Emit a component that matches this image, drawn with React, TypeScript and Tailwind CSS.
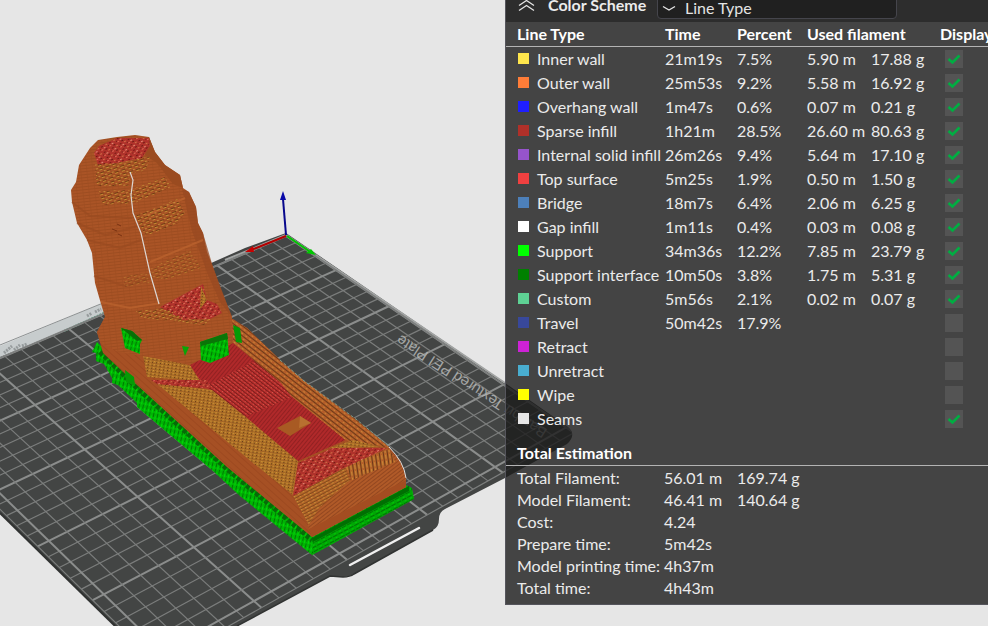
import React from "react";

type Pt = [number, number];

const rows = [
  { name: "Inner wall", color: "bg-[#ffe64c]", time: "21m19s", pct: "7.5%", len: "5.90 m", wt: "17.88 g", on: true },
  { name: "Outer wall", color: "bg-[#ff7d38]", time: "25m53s", pct: "9.2%", len: "5.58 m", wt: "16.92 g", on: true },
  { name: "Overhang wall", color: "bg-[#1f1fff]", time: "1m47s", pct: "0.6%", len: "0.07 m", wt: "0.21 g", on: true },
  { name: "Sparse infill", color: "bg-[#b03029]", time: "1h21m", pct: "28.5%", len: "26.60 m", wt: "80.63 g", on: true },
  { name: "Internal solid infill", color: "bg-[#9654cc]", time: "26m26s", pct: "9.4%", len: "5.64 m", wt: "17.10 g", on: true },
  { name: "Top surface", color: "bg-[#f04040]", time: "5m25s", pct: "1.9%", len: "0.50 m", wt: "1.50 g", on: true },
  { name: "Bridge", color: "bg-[#4d80ba]", time: "18m7s", pct: "6.4%", len: "2.06 m", wt: "6.25 g", on: true },
  { name: "Gap infill", color: "bg-white", time: "1m11s", pct: "0.4%", len: "0.03 m", wt: "0.08 g", on: true },
  { name: "Support", color: "bg-[#00ff00]", time: "34m36s", pct: "12.2%", len: "7.85 m", wt: "23.79 g", on: true },
  { name: "Support interface", color: "bg-[#008000]", time: "10m50s", pct: "3.8%", len: "1.75 m", wt: "5.31 g", on: true },
  { name: "Custom", color: "bg-[#5ed194]", time: "5m56s", pct: "2.1%", len: "0.02 m", wt: "0.07 g", on: true },
  { name: "Travel", color: "bg-[#38489b]", time: "50m42s", pct: "17.9%", len: "", wt: "", on: false },
  { name: "Retract", color: "bg-[#cd22d6]", time: "", pct: "", len: "", wt: "", on: false },
  { name: "Unretract", color: "bg-[#49adcf]", time: "", pct: "", len: "", wt: "", on: false },
  { name: "Wipe", color: "bg-[#ffff00]", time: "", pct: "", len: "", wt: "", on: false },
  { name: "Seams", color: "bg-[#e6e6e6]", time: "", pct: "", len: "", wt: "", on: true },
];

const totals = [
  ["Total Filament:", "56.01 m", "169.74 g"],
  ["Model Filament:", "46.41 m", "140.64 g"],
  ["Cost:", "4.24", ""],
  ["Prepare time:", "5m42s", ""],
  ["Model printing time:", "4h37m", ""],
  ["Total time:", "4h43m", ""],
];

/* Perspective projection of bed cells, solved from four known points. */
function solveProjection(src: Pt[], dst: Pt[]) {
  const m: number[][] = [];
  src.forEach(([u, v], i) => {
    const [x, y] = dst[i];
    m.push([u, v, 1, 0, 0, 0, -u * x, -v * x, x]);
    m.push([0, 0, 0, u, v, 1, -u * y, -v * y, y]);
  });
  for (let c = 0; c < 8; c++) {
    let p = c;
    for (let r = c; r < 8; r++) if (Math.abs(m[r][c]) > Math.abs(m[p][c])) p = r;
    [m[c], m[p]] = [m[p], m[c]];
    for (let r = 0; r < 8; r++) {
      if (r === c) continue;
      const f = m[r][c] / m[c][c];
      for (let k = c; k < 9; k++) m[r][k] -= f * m[c][k];
    }
  }
  const h = m.map((row, i) => row[8] / row[i]);
  return (u: number, v: number): Pt => {
    const w = h[6] * u + h[7] * v + 1;
    return [(h[0] * u + h[1] * v + h[2]) / w, (h[3] * u + h[4] * v + h[5]) / w];
  };
}

const project = solveProjection(
  [[0, 0], [25, 5], [5, 20], [25, 20]],
  [[286, 236], [495, 467], [35, 405], [254, 601]],
);

const BED = 25.6;

const PLATE =
  "M0 354 L103 311 L245 248 L286 233 L505 383 L568 427 Q577 435 567 444 L505 478 L445 509 Q439 512 439 519 Q439 527 433 530 L354 574 Q350 577 343 577 L330 576 L237 626 L115 626 L0 513Z";

function Grid() {
  const lines: React.ReactNode[] = [];
  for (let i = 0; i <= 25; i++) {
    const bold = i % 5 === 0;
    const a = project(i, 0);
    const b = project(i, BED);
    const c = project(0, i);
    const d = project(BED, i);
    const stroke = bold ? "#8b8d8c" : "#7b7d7c";
    const width = bold ? 2 : 1.2;
    lines.push(<line key={"u" + i} x1={a[0]} y1={a[1]} x2={b[0]} y2={b[1]} stroke={stroke} strokeWidth={width} />);
    lines.push(<line key={"v" + i} x1={c[0]} y1={c[1]} x2={d[0]} y2={d[1]} stroke={stroke} strokeWidth={width} />);
  }
  const corners = [project(0, 0), project(BED, 0), project(BED, BED), project(0, BED)];
  return (
    <g clipPath="url(#plate)">
      {lines}
      <polygon points={corners.map((p) => p.join(",")).join(" ")} fill="none" stroke="#7b7d7c" strokeWidth="1.2" />
    </g>
  );
}

function Patterns() {
  return (
    <defs>
      <clipPath id="plate">
        <path d={PLATE} />
      </clipPath>
      <pattern id="wall" width="6" height="3" patternUnits="userSpaceOnUse" patternTransform="rotate(-6)">
        <rect width="6" height="3" fill="#aa5426" />
        <rect y="2" width="6" height="1" fill="#9d4d21" />
        <rect x="2" width="1" height="2" fill="#a35023" />
      </pattern>
      <pattern id="side" width="5" height="5" patternUnits="userSpaceOnUse" patternTransform="rotate(42)">
        <rect width="5" height="5" fill="#a65024" />
        <rect y="3" width="5" height="1" fill="#9d4920" />
      </pattern>
      <pattern id="red" width="4" height="3" patternUnits="userSpaceOnUse" patternTransform="rotate(38)">
        <rect width="4" height="3" fill="#b9302e" />
        <rect y="2" width="4" height="1" fill="#7d1d1c" />
        <rect width="1" height="1" fill="#da5a4c" />
      </pattern>
      <pattern id="deepred" width="4" height="3" patternUnits="userSpaceOnUse" patternTransform="rotate(-50)">
        <rect width="4" height="3" fill="#b0292a" />
        <rect y="2" width="4" height="1" fill="#922122" />
      </pattern>
      <pattern id="speckle" width="9" height="6" patternUnits="userSpaceOnUse" patternTransform="rotate(-28)">
        <rect width="9" height="6" fill="#b0322b" />
        <rect x="1" width="2" height="1" fill="#df6a55" />
        <rect x="5" y="1" width="2" height="1" fill="#6b1c14" />
        <rect x="7" y="3" width="2" height="1" fill="#cf7046" />
        <rect x="2" y="3" width="2" height="1" fill="#741b15" />
        <rect x="4" y="5" width="2" height="1" fill="#e08a72" />
        <rect y="5" width="1" height="1" fill="#6f2116" />
      </pattern>
      <pattern id="gold" width="4" height="3" patternUnits="userSpaceOnUse" patternTransform="rotate(8)">
        <rect width="4" height="3" fill="#b37529" />
        <rect y="2" width="4" height="1" fill="#a26324" />
        <rect x="1" y="1" width="1" height="1" fill="#5e3a15" />
        <rect x="3" width="1" height="1" fill="#cd9836" />
      </pattern>
      <pattern id="goldfront" width="5" height="3" patternUnits="userSpaceOnUse" patternTransform="rotate(-28)">
        <rect width="5" height="3" fill="#b36629" />
        <rect y="2" width="5" height="1" fill="#854b1c" />
        <rect x="1" width="2" height="1" fill="#ca8c37" />
      </pattern>
      <pattern id="goldloose" width="7" height="4" patternUnits="userSpaceOnUse" patternTransform="rotate(-18)">
        <rect width="3" height="1" fill="#c88b35" />
        <rect x="4" y="2" width="2" height="1" fill="#c08a38" />
        <rect y="3" width="4" height="1" fill="#713b16" />
      </pattern>
      <pattern id="rib" width="5" height="4" patternUnits="userSpaceOnUse" patternTransform="rotate(38)">
        <rect width="5" height="4" fill="#b35d29" />
        <rect y="3" width="5" height="1" fill="#6c3b18" />
        <rect y="1" width="2" height="1" fill="#c88135" />
      </pattern>
      <pattern id="ribfront" width="4" height="6" patternUnits="userSpaceOnUse" patternTransform="rotate(-8)">
        <rect width="4" height="6" fill="#b5622a" />
        <rect width="1" height="6" fill="#6c3b18" />
        <rect x="2" width="1" height="4" fill="#c68a36" />
      </pattern>
      <pattern id="front" width="6" height="3" patternUnits="userSpaceOnUse" patternTransform="rotate(-38)">
        <rect width="6" height="3" fill="#b05a28" />
        <rect y="2" width="6" height="1" fill="#934720" />
      </pattern>
      <pattern id="green" width="4" height="6" patternUnits="userSpaceOnUse" patternTransform="rotate(12)">
        <rect width="4" height="6" fill="#00b404" />
        <rect width="1" height="4" fill="#007a03" />
        <rect x="2" y="3" width="1" height="3" fill="#00d806" />
      </pattern>
      <pattern id="greenfront" width="6" height="4" patternUnits="userSpaceOnUse" patternTransform="rotate(-28)">
        <rect width="6" height="4" fill="#00a804" />
        <rect y="2" width="5" height="1" fill="#007503" />
        <rect x="2" width="2" height="1" fill="#00ca05" />
      </pattern>
    </defs>
  );
}

function Plate() {
  return (
    <g>
      <path d={PLATE} fill="#434544" />
      <path d="M0 346 L103 303 L112 311 L0 357Z" fill="#c7cccd" />
      <path d="M0 345 L103 303 M0 358 L103 314" stroke="#8d9192" strokeWidth="1" />
      <path d="M225 260 L286 235 L505 383" fill="none" stroke="#a2a4a3" strokeWidth="2" />
      <path d="M4 353 L12 346 M14 350 l6 -5 M22 346 l5 -2 M87 316 l5 -3 M95 312 l6 -3" stroke="#969b9c" strokeWidth="3" strokeDasharray="2 1" />
      <path d="M64 331 L104 313" stroke="#4e9477" strokeWidth="2" strokeDasharray="2 1" />
      <Grid />
      <text
        transform="translate(548 430) rotate(213)"
        className="font-['Liberation_Sans'] text-[15px]"
        fill="#b5b7b6"
        opacity="0.85"
      >
        Bambu Textured PEI Plate
      </text>
      <path d="M115 626 L0 513" stroke="#303231" strokeWidth="2" />
      <path d="M237 626 L330 576 L343 577 Q350 577 354 574 L433 530" fill="none" stroke="#313332" strokeWidth="1.5" />
      <path d="M350 565 L419 528" stroke="#f0f0f0" strokeWidth="2.5" strokeLinecap="round" />
    </g>
  );
}

function Axes() {
  return (
    <g strokeWidth="2">
      <path d="M286 235 L283 199" stroke="#08088c" />
      <path d="M280 200 L283 191 L286 200Z" fill="#0909a8" />
      <path d="M286 236 L251 250" stroke="#b50000" />
      <path d="M253 246 L245 252 L254 252Z" fill="#c80000" />
      <path d="M287 236 L309 251" stroke="#00c400" />
      <path d="M311 249 L316 255 L306 253Z" fill="#00c800" />
    </g>
  );
}

function Model() {
  return (
    <g>
      {/* support skirt */}
      <path
        d="M97 342 L92 352 L96 353 L96 361 L104 364 L112 378 L112 383 L118 385 L137 403 L137 407 L163 429 L213 471 L240 496 L312 555 L414 499 L412 488 L400 482 L312 530 L130 376Z"
        fill="url(#green)"
      />
      <path d="M312 538 L409 486 L410 494 L313 546Z" fill="#006f03" />
      <path d="M313 542 L411 490 L414 499 L312 555Z" fill="url(#greenfront)" />
      <path d="M100 352 L137 388 L227 469 L312 540" fill="none" stroke="#076b08" strokeWidth="5" strokeDasharray="4 2" />

      {/* body */}
      <path
        d="M97 332 L103 353 L137 385 L227 467 L312 537 L406 487 L406 477 L400 460 L390 448 L357 420 L303 380 L280 360 L247 328 L233 319 L105 317Z"
        fill="url(#side)"
      />
      <path d="M232 320 L247 328 L280 360 L303 380 L357 420 L390 448 L345 440 L292 397 L233 344Z" fill="url(#rib)" />
      <path d="M293 496 L340 470 L387 448 L400 460 L406 477 L406 487 L312 537 L304 515Z" fill="url(#front)" />
      <path d="M293 496 L345 466 L350 480 L320 507 L309 525Z" fill="url(#goldfront)" />
      <path d="M345 466 L390 449 L395 462 L352 480Z" fill="url(#ribfront)" />
      <path d="M309 529 L406 480 L406 487 L312 537Z" fill="#a34d21" />
      <path d="M187 365 L233 343 L280 382 L292 397 L345 440 L298 461 L245 417 L207 388Z" fill="url(#red)" />
      <path d="M292 397 L345 440 L298 461 L245 417Z" fill="url(#deepred)" />
      <path d="M187 365 L233 343 L254 361 L207 386Z" fill="url(#deepred)" />
      <path d="M277 428 L300 416 L311 423 L290 436Z" fill="#a85a23" />
      <path d="M300 416 L311 423 L299 428Z" fill="#b87030" />
      <path d="M157 384 L212 390 L247 418 L298 461 L293 495 L253 463Z" fill="url(#gold)" />
      <path d="M143 355 L190 365 L200 381 L147 377Z" fill="url(#gold)" />
      <path d="M151 380 L207 380 L212 389 L157 384Z" fill="url(#speckle)" />
      <path d="M298 463 L333 448 L387 448 L340 470 L293 496Z" fill="url(#speckle)" />
      <path d="M330 448 L353 440 L382 447Z" fill="url(#gold)" />
      <path d="M280 360 L303 380 L357 420 L389 446" fill="none" stroke="#7e9b8b" strokeWidth="1" strokeDasharray="3 2" />
      <path d="M389 447 Q404 462 406 478" fill="none" stroke="#dedede" strokeWidth="1" />

      {/* tower */}
      <path
        d="M90 148 L98 140 L117 137 L135 135 L149 137 L155 152 L165 165 L180 175 L183 188 L189 192 L196 207 L198 223 L203 233 L207 252 L213 267 L220 287 L232 317 L233 343 L190 365 L143 356 L118 352 L100 342 L97 332 L105 317 L99 297 L95 283 L92 253 L87 240 L77 223 L72 202 L71 190 L76 182 L79 165Z"
        fill="url(#wall)"
      />
      <path d="M149 137 L155 152 L165 165 L180 175 L183 188 L173 184 L157 163 L145 155Z" fill="#9a4b20" />
      <path d="M182 189 L189 192 L196 207 L198 223 L203 233 L213 267 L232 317 L220 302 L208 275 L192 231Z" fill="#984a21" opacity="0.75" />
      <path d="M72 202 L90 216 L132 218 M77 223 L105 235 L138 226 M87 240 L120 248 L146 238 M94 276 L125 286 L152 277" fill="none" stroke="#984920" strokeWidth="2" opacity="0.6" />
      <path d="M101 302 L130 308 L160 303 M145 216 L185 198 M150 262 L203 240" fill="none" stroke="#bc642f" strokeWidth="2" opacity="0.7" />
      <path d="M94 153 L99 146 L117 138 L149 138 L150 146 L142 158 L117 163 L98 165Z" fill="url(#speckle)" />
      <path d="M95 164 L117 163 L142 158 L150 157 L146 170 L131 174 L128 186 L97 186Z" fill="url(#goldloose)" />
      <path d="M98 191 L130 190 L165 177 L171 187 L135 203 L102 205Z" fill="url(#goldloose)" />
      <path d="M135 216 L177 199 L185 213 L178 223 L146 236Z" fill="url(#goldloose)" />
      <path d="M151 268 L190 250 L201 268 L170 279 L151 279Z" fill="url(#goldloose)" opacity="0.6" />
      <path d="M123 276 L148 273 L150 283 L125 287Z" fill="url(#goldloose)" opacity="0.5" />
      <path d="M160 307 L203 284 L207 300 L217 304 L222 313 L210 319 L183 320Z" fill="url(#speckle)" />
      <path d="M136 311 L165 308 L185 319 L212 319 L204 325 L172 321 L142 318Z" fill="url(#goldloose)" />
      <path d="M201 286 L207 300 L200 309Z" fill="url(#gold)" />
      <path d="M117 224 l4 2 M112 229 l5 2 M118 234 l4 2" stroke="#7a3212" strokeWidth="1" />
      <path d="M130 172 L133 180 L131 195 L133 213 L141 233 L150 273 L159 304" fill="none" stroke="#dcd6d2" strokeWidth="1.2" />

      {/* support in openings */}
      <path d="M121 328 L132 331 L142 340 L140 344 L140 354 L125 348Z" fill="url(#green)" />
      <path d="M121 328 L132 331 L142 340 L137 341Z" fill="#087007" />
      <path d="M200 342 L227 333 L229 355 L210 363 L201 360Z" fill="url(#green)" />
      <path d="M200 342 L227 333 L228 339 L201 346Z" fill="#0a7508" />
      <path d="M233 325 L240 328 L242 343 L236 342Z" fill="#059a06" />
      <path d="M182 346 L189 347 L185 356Z" fill="#08a607" />
      <path d="M125 370 L134 377 L135 386 L126 382Z" fill="#069b06" />
    </g>
  );
}

function Scene() {
  return (
    <svg
      className="absolute left-0 top-0"
      width="988"
      height="626"
      viewBox="0 0 988 626"
      role="img"
      aria-label="Sliced model on the build plate"
    >
      <Patterns />
      <Plate />
      <Axes />
      <Model />
    </svg>
  );
}

function Check({ name, on }: { name: string; on: boolean }) {
  return (
    <label className="relative block size-[18px]">
      <input
        type="checkbox"
        defaultChecked={on}
        aria-label={"Display " + name}
        className="peer block size-[18px] appearance-none bg-[#545454]"
      />
      <svg
        viewBox="0 0 18 18"
        className="pointer-events-none absolute inset-0 hidden size-[18px] peer-checked:block"
        fill="none"
        stroke="#00ae42"
        strokeWidth="2.6"
      >
        <path d="M3.5 9 L7.5 12.5 L14.5 5.5" />
      </svg>
    </label>
  );
}

function PanelHeader() {
  return (
    <div className="flex h-[22px] items-end bg-[#2d2d2d] pl-[11px] pb-[3px]">
      <button type="button" aria-label="Collapse panel" className="flex h-[26px] w-[31px] items-center">
        <svg width="20" height="20" viewBox="0 0 20 20" fill="none" stroke="#e4e4e4" strokeWidth="1.3">
          <path d="M2 9.5 L9.5 4.5 L17 9.5 M2 14.5 L9.5 9.5 L17 14.5" />
        </svg>
      </button>
      <label htmlFor="scheme" className="w-[109px] pb-0.5 font-bold leading-6">
        Color Scheme
      </label>
      <div className="relative">
        <select
          id="scheme"
          className="block h-[26px] w-[240px] appearance-none rounded-sm border border-[#45454c] bg-[#202020] pl-[27px] pt-1 text-base leading-5 text-[#e4e4e4]"
        >
          <option>Line Type</option>
        </select>
        <svg
          className="pointer-events-none absolute bottom-1 left-[5px]"
          width="14"
          height="14"
          viewBox="0 0 14 14"
          fill="none"
          stroke="#e4e4e4"
          strokeWidth="1.4"
        >
          <path d="M1 5.5 L7 9 L13 5.5" />
        </svg>
      </div>
    </div>
  );
}

export default function App() {
  return (
    <main className="relative flex min-h-screen items-start overflow-hidden bg-[#e6e6e6] font-['Lato',sans-serif] text-base text-[#ebebeb]">
      <Scene />
      <section className="relative ml-[505px] min-w-0 flex-1 overflow-hidden border-b border-l border-[#55555c] bg-[#1b1b1b]/80">
        <PanelHeader />
        <table className="w-[504px] table-fixed border-collapse whitespace-nowrap text-left">
          <colgroup>
            <col className="w-[159px]" />
            <col className="w-[72px]" />
            <col className="w-[70px]" />
            <col className="w-[64px]" />
            <col className="w-[69px]" />
            <col className="w-[70px]" />
          </colgroup>
          <thead>
            <tr className="h-6 border-b border-[#b4b4b4] font-bold leading-[23px] text-white">
              <th className="p-0 pl-[11px]">Line Type</th>
              <th className="p-0">Time</th>
              <th className="p-0">Percent</th>
              <th className="p-0" colSpan={2}>Used filament</th>
              <th className="p-0">Display</th>
            </tr>
          </thead>
          <tbody>
            {rows.map((r) => (
              <tr key={r.name} className="h-6 leading-6">
                <td className="p-0 pl-3">
                  <span className="flex items-center">
                    <span className={"mr-2 mb-px size-[11px] shrink-0 " + r.color} />
                    {r.name}
                  </span>
                </td>
                <td className="p-0">{r.time}</td>
                <td className="p-0">{r.pct}</td>
                <td className="p-0">{r.len}</td>
                <td className="p-0">{r.wt}</td>
                <td className="p-0 pl-[5px]">
                  <Check name={r.name} on={r.on} />
                </td>
              </tr>
            ))}
          </tbody>
        </table>
        <h2 className="mt-[10px] border-b border-[#b4b4b4] pl-[11px] font-bold leading-6 text-white">Total Estimation</h2>
        <table className="mt-px mb-[5px] table-fixed border-collapse whitespace-nowrap text-left">
          <colgroup>
            <col className="w-[158px]" />
            <col className="w-[73px]" />
            <col className="w-[80px]" />
          </colgroup>
          <tbody>
            {totals.map(([k, a, b]) => (
              <tr key={k} className="h-[22px] leading-[22px]">
                <th scope="row" className="p-0 pl-[11px] font-normal">{k}</th>
                <td className="p-0">{a}</td>
                <td className="p-0">{b}</td>
              </tr>
            ))}
          </tbody>
        </table>
      </section>
    </main>
  );
}
